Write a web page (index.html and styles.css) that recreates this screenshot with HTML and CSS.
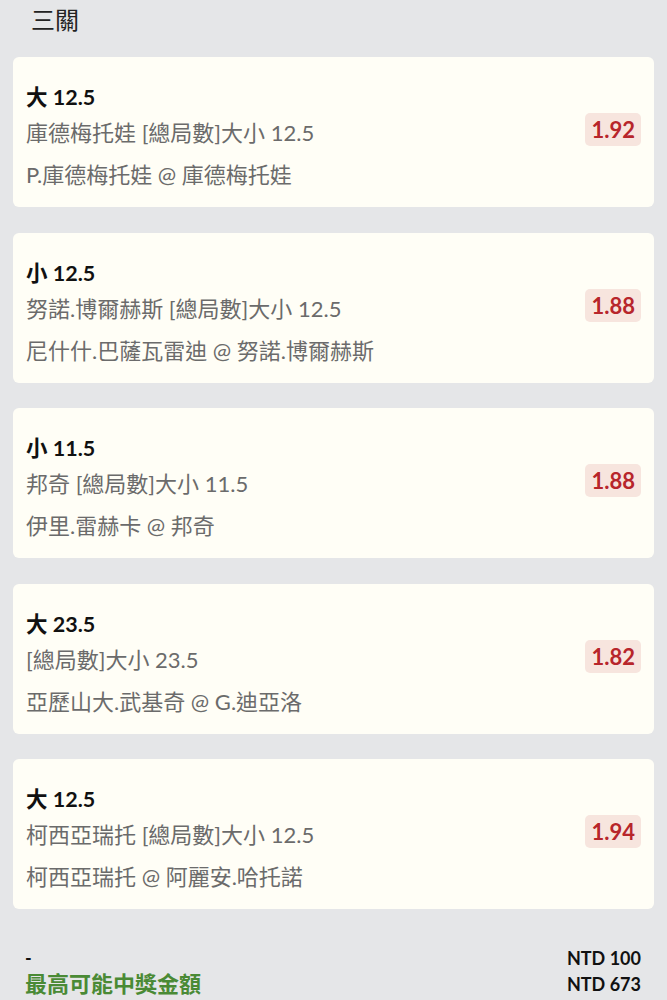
FILE: index.html
```html
<!DOCTYPE html>
<html lang="zh-TW">
<head>
    <meta charset="UTF-8">
    <meta name="viewport" content="width=device-width, initial-scale=1.0">
    <title>三關</title>
    <link rel="stylesheet" href="styles.css">
</head>
<body>

    <div class="header">三關</div>

    <div class="bet-list">
        <div class="bet-card">
            <div class="bet-info">
                <p class="bet-title">大 12.5</p>
                <p class="bet-market">庫德梅托娃 [總局數]大小 12.5</p>
                <p class="bet-match">P.庫德梅托娃 @ 庫德梅托娃</p>
            </div>
            <span class="odds">1.92</span>
        </div>

        <div class="bet-card">
            <div class="bet-info">
                <p class="bet-title">小 12.5</p>
                <p class="bet-market">努諾.博爾赫斯 [總局數]大小 12.5</p>
                <p class="bet-match">尼什什.巴薩瓦雷迪 @ 努諾.博爾赫斯</p>
            </div>
            <span class="odds">1.88</span>
        </div>

        <div class="bet-card">
            <div class="bet-info">
                <p class="bet-title">小 11.5</p>
                <p class="bet-market">邦奇 [總局數]大小 11.5</p>
                <p class="bet-match">伊里.雷赫卡 @ 邦奇</p>
            </div>
            <span class="odds">1.88</span>
        </div>

        <div class="bet-card">
            <div class="bet-info">
                <p class="bet-title">大 23.5</p>
                <p class="bet-market">[總局數]大小 23.5</p>
                <p class="bet-match">亞歷山大.武基奇 @ G.迪亞洛</p>
            </div>
            <span class="odds">1.82</span>
        </div>

        <div class="bet-card">
            <div class="bet-info">
                <p class="bet-title">大 12.5</p>
                <p class="bet-market">柯西亞瑞托 [總局數]大小 12.5</p>
                <p class="bet-match">柯西亞瑞托 @ 阿麗安.哈托諾</p>
            </div>
            <span class="odds">1.94</span>
        </div>
    </div>

    <!-- 投注金額與最高可能中獎金額 -->
    <div class="summary">
        <div class="summary-row">
            <span class="stake-label">-</span>
            <span class="amount">NTD 100</span>
        </div>
        <div class="summary-row">
            <span class="win-label">最高可能中獎金額</span>
            <span class="amount">NTD 673</span>
        </div>
    </div>

</body>
</html>
```

FILE: styles.css
```css
body {
    font-family: Lato, "Noto Sans CJK TC", sans-serif;
    margin: 0;
    background-color: #e5e6e8;
    color: #111;
}
p {
    margin: 0;
}
.header {
    font-size: 24px;
    color: #222;
    line-height: 40px;
    padding: 0 31px;
    height: 44px;
    box-sizing: border-box;
}
.bet-list {
    display: flex;
    flex-direction: column;
    gap: 25.5px;
    padding: 13px 13px 0 13px;
}
.bet-card {
    display: flex;
    align-items: flex-start;
    justify-content: space-between;
    background-color: #fffef6;
    border-radius: 6px;
    height: 150px;
    box-sizing: border-box;
    padding: 24px 13px 10px 13px;
}
.bet-title {
    font-size: 21.5px;
    font-weight: bold;
    line-height: 32px;
}
.bet-market {
    font-size: 22px;
    color: #6b6b6b;
    line-height: 40px;
}
.bet-match {
    font-size: 22px;
    color: #6b6b6b;
    line-height: 44px;
}
.odds {
    margin-top: 32px;
    background-color: #f7e5de;
    color: #b7262b;
    font-size: 22px;
    font-weight: bold;
    padding: 3px 6px;
    border-radius: 5px;
    line-height: 27px;
}
.summary {
    padding: 36px 26px 0 25px;
}
.summary-row {
    display: flex;
    justify-content: space-between;
    align-items: center;
    line-height: 26px;
}
.stake-label {
    font-size: 18px;
    font-weight: bold;
}
.win-label {
    font-size: 22px;
    font-weight: bold;
    color: #4a8a35;
}
.amount {
    font-size: 18px;
    font-weight: bold;
}
```
